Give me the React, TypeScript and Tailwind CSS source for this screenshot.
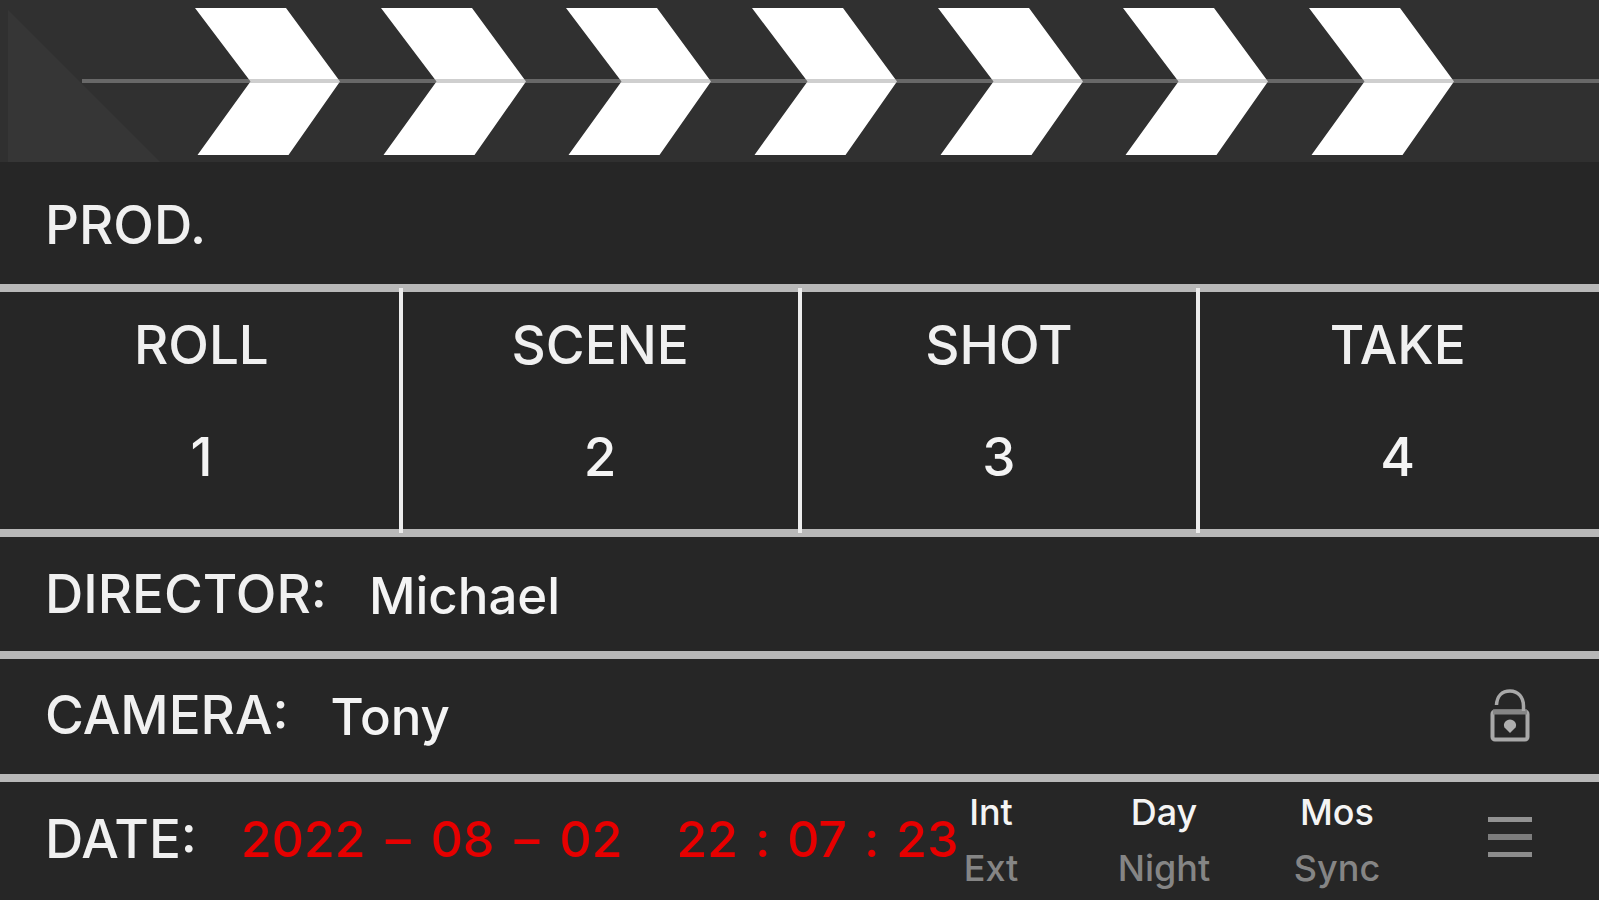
import { Fragment } from "react";

const slate = [
  { label: "ROLL", value: "1" },
  { label: "SCENE", value: "2" },
  { label: "SHOT", value: "3" },
  { label: "TAKE", value: "4" },
];

const toggles = [
  { on: "Int", off: "Ext" },
  { on: "Day", off: "Night" },
  { on: "Mos", off: "Sync" },
];

const labelStyle = "text-[53px] leading-[60px] font-medium text-[#f0f0f0]";
const valueStyle = "text-[53px] leading-[60px] font-medium";
const nameStyle = "pt-1 text-[51px] leading-[60px] font-medium";

function Chevron() {
  return (
    <svg width="145" height="147" viewBox="0 0 145 147" className="shrink-0" aria-hidden="true">
      <path d="M0 0H91L145 73.5L93.5 147H2.5L55.5 73.5Z" fill="#fff" />
    </svg>
  );
}

function ClapperStick() {
  return (
    <header className="relative h-[162px] bg-[#303030]">
      <svg className="absolute bottom-0 left-2" width="152" height="152" viewBox="0 0 152 152" aria-hidden="true">
        <path d="M0 0L152 152H0Z" fill="#363636" />
      </svg>
      <div className="flex justify-between pt-2 pr-[145px] pl-[195px]">
        {Array.from({ length: 7 }, (_, i) => (
          <Chevron key={i} />
        ))}
      </div>
      <div className="absolute top-[79px] right-0 left-[82px] h-1 bg-[#9f9f9f]/50" />
    </header>
  );
}

function Rule() {
  return <div className="h-2 shrink-0 bg-[#b8b8b8]" />;
}

function UnlockIcon() {
  return (
    <svg width="40" height="54" viewBox="0 0 40 54" fill="none" stroke="#a8a8a8" strokeWidth="4" aria-hidden="true">
      <rect x="2.5" y="23.5" width="35" height="28" rx="2.5" />
      <path d="M3 24H37" stroke="#858585" strokeWidth="5" />
      <path d="M6.5 17C7 8 12 3 20 3C28 3 33.5 9 33.5 18V23" strokeWidth="3.5" />
      <path d="M20 45L14.5 39.5C12.5 35.5 16 31.5 20 31.5C24 31.5 27.5 35.5 25.5 39.5Z" fill="#b0b0b0" stroke="none" />
    </svg>
  );
}

export default function App() {
  return (
    <main className="flex min-h-screen flex-col overflow-hidden bg-[#262626] font-[Inter,sans-serif] text-[#f4f4f4]">
      <ClapperStick />

      <section className="flex h-[122px] items-center px-[45px] pt-1">
        <h1 className={labelStyle}>PROD.</h1>
      </section>
      <Rule />

      <section className="flex h-[237px] px-1">
        {slate.map((s, i) => (
          <Fragment key={s.label}>
            {i > 0 && <div className="relative -my-1 w-1 shrink-0 bg-[#ececec]" />}
            <div className="flex flex-1 flex-col items-center gap-[52px] pt-[23px]">
              <h2 className={labelStyle}>{s.label}</h2>
              <p className={valueStyle}>{s.value}</p>
            </div>
          </Fragment>
        ))}
      </section>
      <Rule />

      <section className="flex h-[114px] items-center gap-[42px] px-[45px]">
        <h2 className={labelStyle}>DIRECTOR:</h2>
        <p className={nameStyle}>Michael</p>
      </section>
      <Rule />

      <section className="flex h-[115px] items-center gap-[42px] pr-[61px] pb-1 pl-[45px]">
        <h2 className={labelStyle}>CAMERA:</h2>
        <p className={nameStyle}>Tony</p>
        <button type="button" aria-label="Unlock" className="ml-auto flex w-14 justify-center">
          <UnlockIcon />
        </button>
      </section>
      <Rule />

      <section className="flex flex-1 items-center pr-[61px] pb-1 pl-[45px]">
        <h2 className={labelStyle}>DATE:</h2>
        <time
          dateTime="2022-08-02T22:07:23"
          className="ml-[44px] flex gap-[54px] text-[50px] leading-[60px] font-medium text-[#e60000]"
        >
          <span className="flex gap-5">
            <span>2022</span>
            <span>–</span>
            <span>08</span>
            <span>–</span>
            <span>02</span>
          </span>
          <span className="flex gap-[17px]">
            <span>22</span>
            <span>:</span>
            <span>07</span>
            <span>:</span>
            <span>23</span>
          </span>
        </time>
        <div className="ml-auto flex items-center gap-[117px]">
          {toggles.map((t) => (
            <button key={t.on} type="button" className="flex w-14 flex-col items-center gap-4 pt-0.5 text-[36px] leading-[40px] font-medium">
              <span>{t.on}</span>
              <span className="text-[#858585]">{t.off}</span>
            </button>
          ))}
          <button type="button" aria-label="Menu" className="flex w-14 flex-col items-center gap-3 pb-1">
            <span className="h-[5px] w-11 bg-[#929292]" />
            <span className="h-[6px] w-11 bg-[#7c7c7c]" />
            <span className="h-[5px] w-11 bg-[#8c8c8c]" />
          </button>
        </div>
      </section>
    </main>
  );
}
